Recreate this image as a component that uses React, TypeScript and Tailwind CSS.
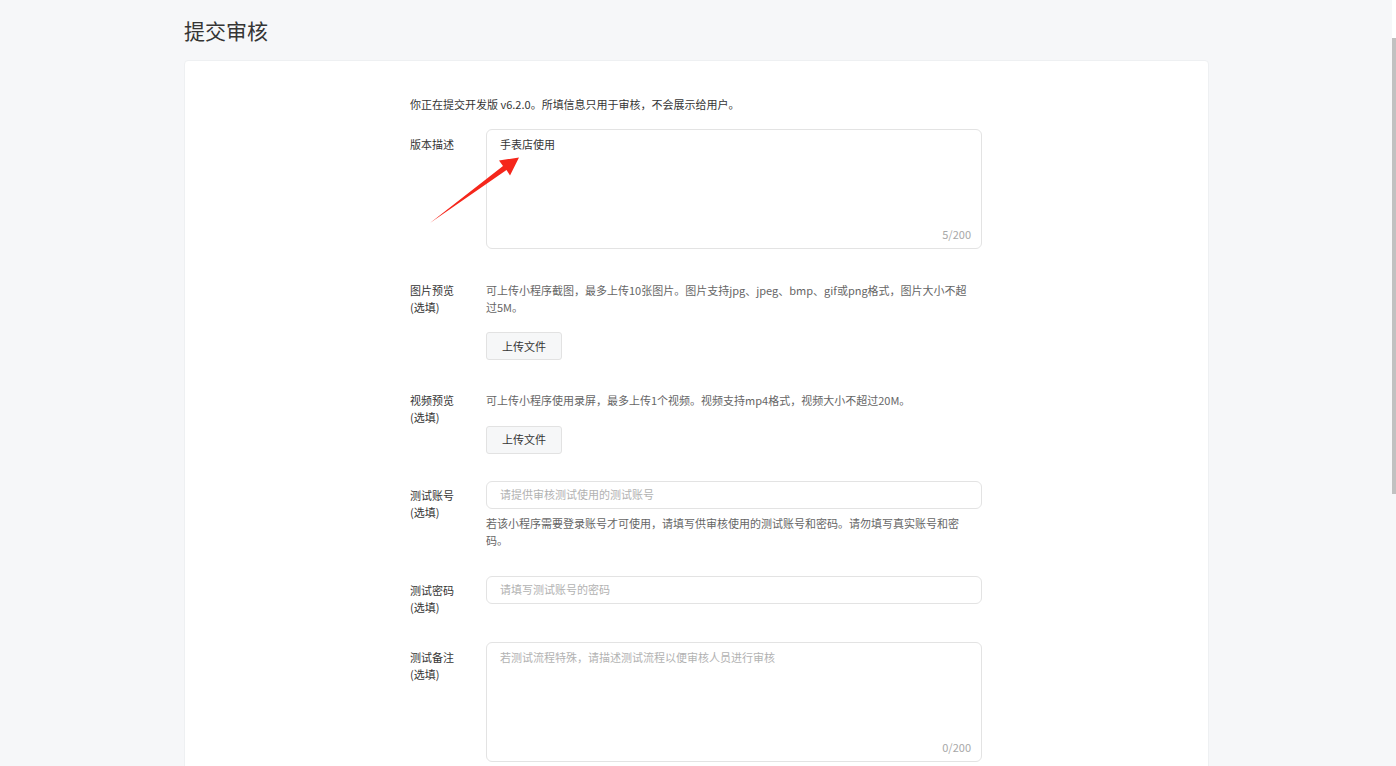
import React from "react";

const font = { fontFamily: '"Noto Sans CJK SC", "Liberation Sans", sans-serif' };

function Label({ title, optional, className = "" }: { title: string; optional?: boolean; className?: string }) {
  return (
    <div className={`w-[76px] shrink-0 text-[11px] leading-[17px] text-[#353535] ${className}`}>
      <div>{title}</div>
      {optional && <div>(选填)</div>}
    </div>
  );
}

function UploadButton() {
  return (
    <button
      type="button"
      className="h-[28px] w-[76px] rounded-[3px] border border-[#e2e2e2] bg-[#f6f7f8] text-[11px] text-[#353535]"
    >
      上传文件
    </button>
  );
}

function TextArea({ value, placeholder, count }: { value?: string; placeholder?: string; count: string }) {
  return (
    <div className="relative h-[120px] w-full rounded-[6px] border border-[#e3e3e3] bg-white px-[13px] py-[6px] text-[11px] leading-[17px]">
      {value ? (
        <span className="text-[#353535]">{value}</span>
      ) : (
        <span className="text-[#b2b2b2]">{placeholder}</span>
      )}
      <span className="absolute right-[10px] bottom-[5px] text-[#a8a8a8]">{count}</span>
    </div>
  );
}

function Input({ placeholder }: { placeholder: string }) {
  return (
    <div className="flex h-[28px] w-full items-center rounded-[6px] border border-[#e3e3e3] bg-white px-[13px] text-[11px] text-[#b2b2b2]">
      {placeholder}
    </div>
  );
}

export default function App() {
  return (
    <div className="relative h-[766px] overflow-hidden bg-[#f6f7f9]" style={font}>
      <div className="ml-[184px] w-[1025px]">
        <h1 className="pt-[16px] text-[21px] leading-[28px] font-normal text-[#353535]">提交审核</h1>

        <div className="mt-[16px] h-[720px] rounded-[4px] border border-[#eef0f2] bg-white">
          <div className="ml-[225px] w-[572px] pt-[35px]">
            <p className="text-[11px] leading-[17px] text-[#353535]">
              你正在提交开发版 v6.2.0。所填信息只用于审核，不会展示给用户。
            </p>

            <div className="mt-[16px] flex">
              <Label title="版本描述" className="mt-[7px]" />
              <div className="flex-1">
                <TextArea value="手表店使用" count="5/200" />
              </div>
            </div>

            <div className="mt-[33px] flex">
              <Label title="图片预览" optional />
              <div className="flex-1">
                <div className="text-[11px] leading-[17px] whitespace-nowrap text-[#666]">
                  <div>可上传小程序截图，最多上传10张图片。图片支持jpg、jpeg、bmp、gif或png格式，图片大小不超</div>
                  <div>过5M。</div>
                </div>
                <div className="mt-[16px]">
                  <UploadButton />
                </div>
              </div>
            </div>

            <div className="mt-[32px] flex">
              <Label title="视频预览" optional />
              <div className="flex-1">
                <div className="text-[11px] leading-[17px] whitespace-nowrap text-[#666]">
                  可上传小程序使用录屏，最多上传1个视频。视频支持mp4格式，视频大小不超过20M。
                </div>
                <div className="mt-[16px]">
                  <UploadButton />
                </div>
              </div>
            </div>

            <div className="mt-[27px] flex">
              <Label title="测试账号" optional className="mt-[6px]" />
              <div className="flex-1">
                <Input placeholder="请提供审核测试使用的测试账号" />
                <div className="mt-[6px] text-[11px] leading-[17px] whitespace-nowrap text-[#666]">
                  <div>若该小程序需要登录账号才可使用，请填写供审核使用的测试账号和密码。请勿填写真实账号和密</div>
                  <div>码。</div>
                </div>
              </div>
            </div>

            <div className="mt-[27px] flex">
              <Label title="测试密码" optional className="mt-[6px]" />
              <div className="flex-1">
                <Input placeholder="请填写测试账号的密码" />
              </div>
            </div>

            <div className="mt-[26px] flex">
              <Label title="测试备注" optional className="mt-[7px]" />
              <div className="flex-1">
                <TextArea placeholder="若测试流程特殊，请描述测试流程以便审核人员进行审核" count="0/200" />
              </div>
            </div>
          </div>
        </div>
      </div>

      {/* annotation arrow */}
      <svg className="pointer-events-none absolute top-0 left-0" width="1396" height="766">
        <polygon
          points="430,223 503,166 499,160.5 519,157.5 510,175.5 506.5,170"
          fill="#f5261b"
        />
      </svg>

      {/* scrollbar thumb */}
      <div className="absolute top-0 right-0 h-[38px] w-[4px] bg-white" />
      <div className="absolute top-[38px] right-0 h-[456px] w-[4px] bg-[#c1c1c1]" />
    </div>
  );
}
